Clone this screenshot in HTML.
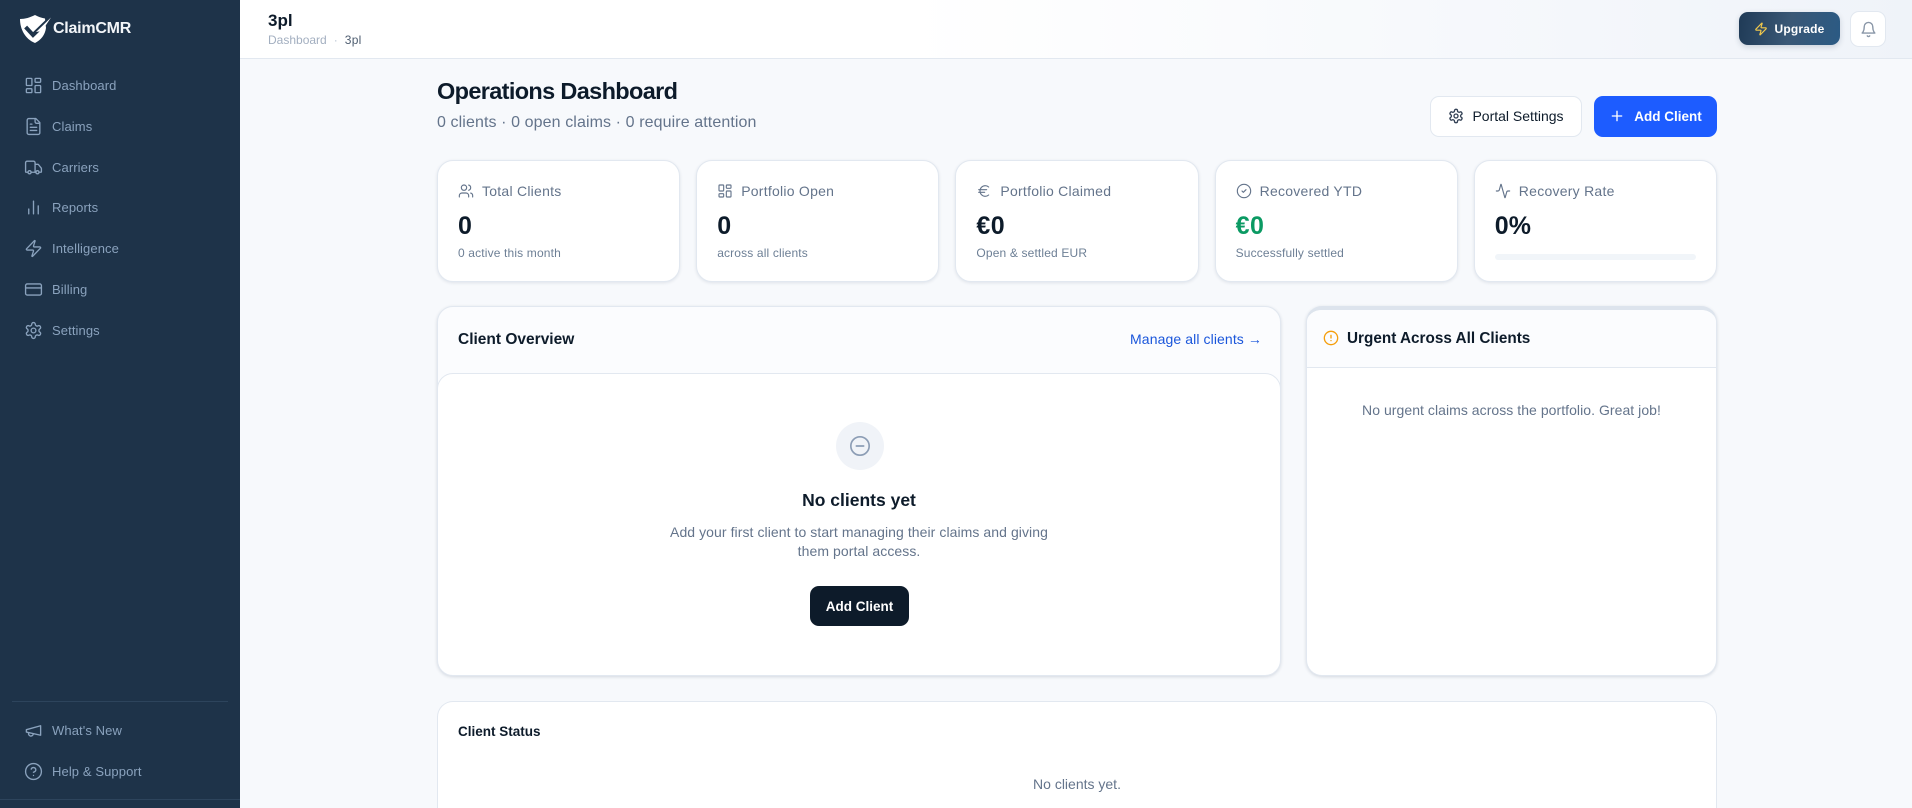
<!DOCTYPE html>
<html lang="en"><head><meta charset="utf-8"><title>ClaimCMR</title>
<style>
*{box-sizing:border-box;margin:0;padding:0}
html,body{width:1912px;height:808px;overflow:hidden;background:#f7f9fc;font-family:"Liberation Sans",sans-serif;color:#0d1b2a}
#page{position:relative;width:1912px;height:808px;overflow:hidden}
.a{position:absolute;white-space:nowrap}
svg{display:block;fill:none;stroke:currentColor;stroke-width:2;stroke-linecap:round;stroke-linejoin:round}
#side{position:absolute;left:0;top:0;width:240px;height:808px;background:#1e3349}
.nav{position:absolute;left:23.500px;height:20px;display:flex;align-items:center;color:#8aa2bd;font-size:13px;font-weight:500;letter-spacing:.1px}
.nav svg{width:19px;height:19px;margin-right:9.500px;flex:none;stroke-width:1.700}
#top{position:absolute;left:240px;top:0;width:1672px;height:59px;background:linear-gradient(90deg,#fff 0%,#fff 40%,#eff3f9 100%);border-bottom:1px solid #e2e8f0}
.btn{position:absolute;display:flex;align-items:center;justify-content:center;border-radius:9px;font-size:14px}
.stat{position:absolute;top:160px;width:243.200px;height:122px;background:#fff;border:1px solid #e2e8f0;border-radius:16px;box-shadow:0 1px 3px rgba(30,50,80,.11)}
.stat .l{position:absolute;left:20px;top:21px;height:18px;display:flex;align-items:center;font-size:14px;letter-spacing:.25px;font-weight:500;color:#64748b;white-space:nowrap}
.stat .l svg{width:16px;height:16px;margin-right:8px;stroke-width:1.700}
.stat .v{position:absolute;left:20px;top:50px;font-size:25px;line-height:30px;font-weight:700}
.stat .s{position:absolute;left:20px;top:84px;font-size:12px;letter-spacing:.15px;line-height:16px;color:#6d7f95;white-space:nowrap}
.panel{position:absolute;background:#fff;border:1px solid #e2e8f0;border-radius:16px}
</style></head><body><div id="page">
<div id="side">
<svg class="a" style="left:19px;top:14px;stroke:none" width="33" height="30" viewBox="0 0 33 30"><path fill="#fff" d="M1 5C6 5 11 3.500 16 1c3 1.700 6 2.800 10 3.500L27 14C26 21 22 26 16 29 6 25 1 15 1 5z"/><path d="M8 14.500 14 21 29 6.500" stroke="#1e3349" stroke-width="4" stroke-linecap="square" stroke-linejoin="miter"/><path d="M17 18 32 3.500 23 17z" fill="#fff"/></svg>
<div class="a" style="left:53px;top:19px;font-size:16px;line-height:20px;font-weight:700;color:#f2f5f8;letter-spacing:-.25px">ClaimCMR</div>

<div class="nav" style="top:75.500px"><svg viewBox="0 0 24 24"><rect x="3" y="3" width="7" height="9" rx="1"/><rect x="14" y="3" width="7" height="5" rx="1"/><rect x="14" y="12" width="7" height="9" rx="1"/><rect x="3" y="16" width="7" height="5" rx="1"/></svg>Dashboard</div>
<div class="nav" style="top:116.500px"><svg viewBox="0 0 24 24"><path d="M15 2H6a2 2 0 0 0-2 2v16a2 2 0 0 0 2 2h12a2 2 0 0 0 2-2V7Z"/><path d="M14 2v4a2 2 0 0 0 2 2h4"/><path d="M10 9H8"/><path d="M16 13H8"/><path d="M16 17H8"/></svg>Claims</div>
<div class="nav" style="top:157.500px"><svg viewBox="0 0 24 24"><path d="M14 18V6a2 2 0 0 0-2-2H4a2 2 0 0 0-2 2v11a1 1 0 0 0 1 1h2"/><path d="M15 18H9"/><path d="M19 18h2a1 1 0 0 0 1-1v-3.650a1 1 0 0 0-.22-.624l-3.480-4.350A1 1 0 0 0 17.520 8H14"/><circle cx="17" cy="18" r="2"/><circle cx="7" cy="18" r="2"/></svg>Carriers</div>
<div class="nav" style="top:197.500px"><svg viewBox="0 0 24 24"><path d="M18 20V10"/><path d="M12 20V4"/><path d="M6 20v-6"/></svg>Reports</div>
<div class="nav" style="top:238.500px"><svg viewBox="0 0 24 24"><path d="M4 14a1 1 0 0 1-.78-1.630l9.900-10.200a.5.5 0 0 1 .86.46l-1.920 6.020A1 1 0 0 0 13 10h7a1 1 0 0 1 .78 1.630l-9.900 10.200a.5.5 0 0 1-.86-.46l1.920-6.020A1 1 0 0 0 11 14z"/></svg>Intelligence</div>
<div class="nav" style="top:279.500px"><svg viewBox="0 0 24 24"><rect x="2" y="5" width="20" height="14" rx="2"/><path d="M2 10h20"/></svg>Billing</div>
<div class="nav" style="top:320.500px"><svg viewBox="0 0 24 24"><path d="M12.220 2h-.44a2 2 0 0 0-2 2v.18a2 2 0 0 1-1 1.730l-.43.25a2 2 0 0 1-2 0l-.15-.08a2 2 0 0 0-2.730.73l-.22.38a2 2 0 0 0 .73 2.730l.15.1a2 2 0 0 1 1 1.720v.51a2 2 0 0 1-1 1.740l-.15.09a2 2 0 0 0-.73 2.730l.22.38a2 2 0 0 0 2.730.73l.15-.08a2 2 0 0 1 2 0l.43.25a2 2 0 0 1 1 1.730V20a2 2 0 0 0 2 2h.44a2 2 0 0 0 2-2v-.18a2 2 0 0 1 1-1.730l.43-.25a2 2 0 0 1 2 0l.15.08a2 2 0 0 0 2.730-.73l.22-.39a2 2 0 0 0-.73-2.730l-.15-.08a2 2 0 0 1-1-1.740v-.5a2 2 0 0 1 1-1.740l.15-.09a2 2 0 0 0 .73-2.730l-.22-.38a2 2 0 0 0-2.730-.73l-.15.08a2 2 0 0 1-2 0l-.43-.25a2 2 0 0 1-1-1.730V4a2 2 0 0 0-2-2z"/><circle cx="12" cy="12" r="3"/></svg>Settings</div>

<div class="a" style="left:12px;top:701px;width:216px;height:1px;background:#2d445c"></div>
<div class="nav" style="top:720px"><svg viewBox="0 0 24 24"><path d="m3 11 18-5v12L3 14v-3z"/><path d="M11.600 16.800a3 3 0 1 1-5.800-1.600"/></svg>What's New</div>
<div class="nav" style="top:761px"><svg viewBox="0 0 24 24"><circle cx="12" cy="12" r="10"/><path d="M9.090 9a3 3 0 0 1 5.830 1c0 2-3 3-3 3"/><path d="M12 17h.01"/></svg>Help &amp; Support</div>
<div class="a" style="left:0;top:799px;width:240px;height:1px;background:#2d445c"></div>
</div>

<div id="top"></div>
<div class="a" style="left:268px;top:11px;font-size:17px;line-height:20px;font-weight:700">3pl</div>
<div class="a" style="left:268px;top:33px;font-size:12px;line-height:14px;color:#a3afc0">Dashboard<span style="margin:0 7px;color:#bcc6d4">·</span><span style="color:#4e5d70;letter-spacing:.3px">3pl</span></div>
<div class="btn" style="left:1739px;top:12px;width:101px;height:33px;background:linear-gradient(100deg,#1f3a56,#3a5876 50%,#2b5a84);box-shadow:0 2px 6px rgba(30,50,80,.18);color:#fff;font-size:12px;font-weight:700;border-radius:9px;letter-spacing:.2px"><svg width="14" height="14" viewBox="0 0 24 24" style="color:#f2c94c;margin-right:6px"><path d="M4 14a1 1 0 0 1-.78-1.630l9.900-10.200a.5.5 0 0 1 .86.46l-1.920 6.020A1 1 0 0 0 13 10h7a1 1 0 0 1 .78 1.630l-9.900 10.200a.5.5 0 0 1-.86-.46l1.920-6.020A1 1 0 0 0 11 14z"/></svg>Upgrade</div>
<div class="btn" style="left:1850px;top:11px;width:36px;height:36px;background:#fff;border:1px solid #e2e8f0;color:#8a97a8"><svg width="17" height="17" viewBox="0 0 24 24" stroke-width="1.800"><path d="M6 8a6 6 0 0 1 12 0c0 7 3 9 3 9H3s3-2 3-9"/><path d="M10.300 21a1.940 1.940 0 0 0 3.400 0"/></svg></div>

<div class="a" style="left:437px;top:77px;font-size:23.500px;line-height:28px;font-weight:700;letter-spacing:-.65px">Operations Dashboard</div>
<div class="a" style="left:437px;top:113px;font-size:16px;line-height:20px;letter-spacing:.1px;color:#64748b">0 clients · 0 open claims · 0 require attention</div>

<div class="btn" style="left:1430px;top:96px;width:152px;height:41px;background:#fff;border:1px solid #e2e8f0;font-weight:500;padding-bottom:1px"><svg width="16" height="16" viewBox="0 0 24 24" style="margin-right:8px;color:#334155"><path d="M12.220 2h-.44a2 2 0 0 0-2 2v.18a2 2 0 0 1-1 1.730l-.43.25a2 2 0 0 1-2 0l-.15-.08a2 2 0 0 0-2.730.73l-.22.38a2 2 0 0 0 .73 2.730l.15.1a2 2 0 0 1 1 1.720v.51a2 2 0 0 1-1 1.740l-.15.09a2 2 0 0 0-.73 2.730l.22.38a2 2 0 0 0 2.730.73l.15-.08a2 2 0 0 1 2 0l.43.25a2 2 0 0 1 1 1.730V20a2 2 0 0 0 2 2h.44a2 2 0 0 0 2-2v-.18a2 2 0 0 1 1-1.730l.43-.25a2 2 0 0 1 2 0l.15.08a2 2 0 0 0 2.730-.73l.22-.39a2 2 0 0 0-.73-2.730l-.15-.08a2 2 0 0 1-1-1.740v-.5a2 2 0 0 1 1-1.740l.15-.09a2 2 0 0 0 .73-2.730l-.22-.38a2 2 0 0 0-2.730-.73l-.15.08a2 2 0 0 1-2 0l-.43-.25a2 2 0 0 1-1-1.730V4a2 2 0 0 0-2-2z"/><circle cx="12" cy="12" r="3"/></svg>Portal Settings</div>
<div class="btn" style="left:1594px;top:96px;width:123px;height:41px;background:#1d5cff;color:#fff;font-size:13.500px;font-weight:600;padding-bottom:1px"><svg width="16" height="16" viewBox="0 0 24 24" style="margin-right:9px"><path d="M5 12h14"/><path d="M12 5v14"/></svg>Add Client</div>

<div class="stat" style="left:437px"><div class="l"><svg viewBox="0 0 24 24"><path d="M16 21v-2a4 4 0 0 0-4-4H6a4 4 0 0 0-4 4v2"/><circle cx="9" cy="7" r="4"/><path d="M22 21v-2a4 4 0 0 0-3-3.870"/><path d="M16 3.130a4 4 0 0 1 0 7.750"/></svg>Total Clients</div><div class="v">0</div><div class="s">0 active this month</div></div>
<div class="stat" style="left:696.200px"><div class="l"><svg viewBox="0 0 24 24"><rect x="3" y="3" width="7" height="9" rx="1"/><rect x="14" y="3" width="7" height="5" rx="1"/><rect x="14" y="12" width="7" height="9" rx="1"/><rect x="3" y="16" width="7" height="5" rx="1"/></svg>Portfolio Open</div><div class="v">0</div><div class="s">across all clients</div></div>
<div class="stat" style="left:955.400px"><div class="l"><svg viewBox="0 0 24 24"><path d="M4 10h12"/><path d="M4 14h9"/><path d="M19 6a7.700 7.700 0 0 0-5.200-2A7.900 7.900 0 0 0 6 12c0 4.400 3.500 8 7.800 8 2 0 3.800-.8 5.200-2"/></svg>Portfolio Claimed</div><div class="v" style="letter-spacing:.5px">€0</div><div class="s">Open &amp; settled EUR</div></div>
<div class="stat" style="left:1214.600px"><div class="l"><svg viewBox="0 0 24 24"><circle cx="12" cy="12" r="10"/><path d="m9 12 2 2 4-4"/></svg>Recovered YTD</div><div class="v" style="color:#0b9a63;letter-spacing:.5px">€0</div><div class="s">Successfully settled</div></div>
<div class="stat" style="left:1473.800px"><div class="l"><svg viewBox="0 0 24 24"><path d="M22 12h-2.480a2 2 0 0 0-1.930 1.460l-2.350 8.360a.25.25 0 0 1-.48 0L9.240 2.180a.25.25 0 0 0-.48 0l-2.350 8.360A2 2 0 0 1 4.490 12H2"/></svg>Recovery Rate</div><div class="v">0%</div><div class="a" style="left:20px;top:92.500px;width:201px;height:6px;border-radius:3px;background:#f1f5f9"></div></div>

<div class="panel" style="left:437px;top:306px;width:844px;height:370px;background:#fbfcfe;box-shadow:0 1px 3px rgba(30,50,80,.16);overflow:hidden">
<div class="a" style="left:20px;top:23px;font-size:15.500px;line-height:20px;font-weight:600">Client Overview</div>
<div class="a" style="right:18px;top:22px;font-size:14px;letter-spacing:.1px;line-height:20px;font-weight:500;color:#1a56db">Manage all clients →</div>
<div class="a" style="left:-1px;top:66px;width:844px;height:303px;background:#fff;border:1px solid #e2e8f0;border-radius:16px"></div>
</div>
<div class="a" style="left:836px;top:422px;width:48px;height:48px;border-radius:50%;background:#f0f3f8"></div>
<svg class="a" style="left:849px;top:435px;color:#8c9db5;stroke-width:1.800" width="22" height="22" viewBox="0 0 24 24"><circle cx="12" cy="12" r="10"/><path d="M8 12h8"/></svg>
<div class="a" style="left:437px;width:844px;top:489px;text-align:center;font-size:17.500px;line-height:22px;font-weight:700">No clients yet</div>
<div class="a" style="left:437px;width:844px;top:522.500px;text-align:center;font-size:14px;letter-spacing:.07px;line-height:19.500px;color:#64748b">Add your first client to start managing their claims and giving<br>them portal access.</div>
<div class="btn" style="left:810px;top:586px;width:99px;height:40px;background:#0d1b2a;color:#fff;font-size:13.500px;font-weight:600">Add Client</div>

<div class="panel" style="left:1306px;top:306px;width:411px;height:370px;border-top:4px solid #dde4ed;box-shadow:0 1px 3px rgba(30,50,80,.16);overflow:hidden">
<div class="a" style="left:-1px;top:0;width:411px;height:58px;background:#fbfcfe;border-bottom:1px solid #e2e8f0"></div>
<svg class="a" style="left:16px;top:20px;color:#f59e0b" width="16" height="16" viewBox="0 0 24 24"><circle cx="12" cy="12" r="10"/><path d="M12 8v4"/><path d="M12 16h.01"/></svg>
<div class="a" style="left:40px;top:19px;font-size:15.300px;line-height:20px;font-weight:600">Urgent Across All Clients</div>
<div class="a" style="left:-1px;width:411px;top:90px;text-align:center;font-size:14px;letter-spacing:.05px;line-height:20px;color:#64748b">No urgent claims across the portfolio. Great job!</div>
</div>

<div class="panel" style="left:437px;top:701px;width:1280px;height:107px;border-bottom:none;border-radius:16px 16px 0 0">
<div class="a" style="left:20px;top:21px;font-size:13.500px;line-height:18px;font-weight:700">Client Status</div>
<div class="a" style="left:0;width:1278px;top:72px;text-align:center;font-size:14px;line-height:20px;color:#64748b">No clients yet.</div>
</div>
</div></body></html>
